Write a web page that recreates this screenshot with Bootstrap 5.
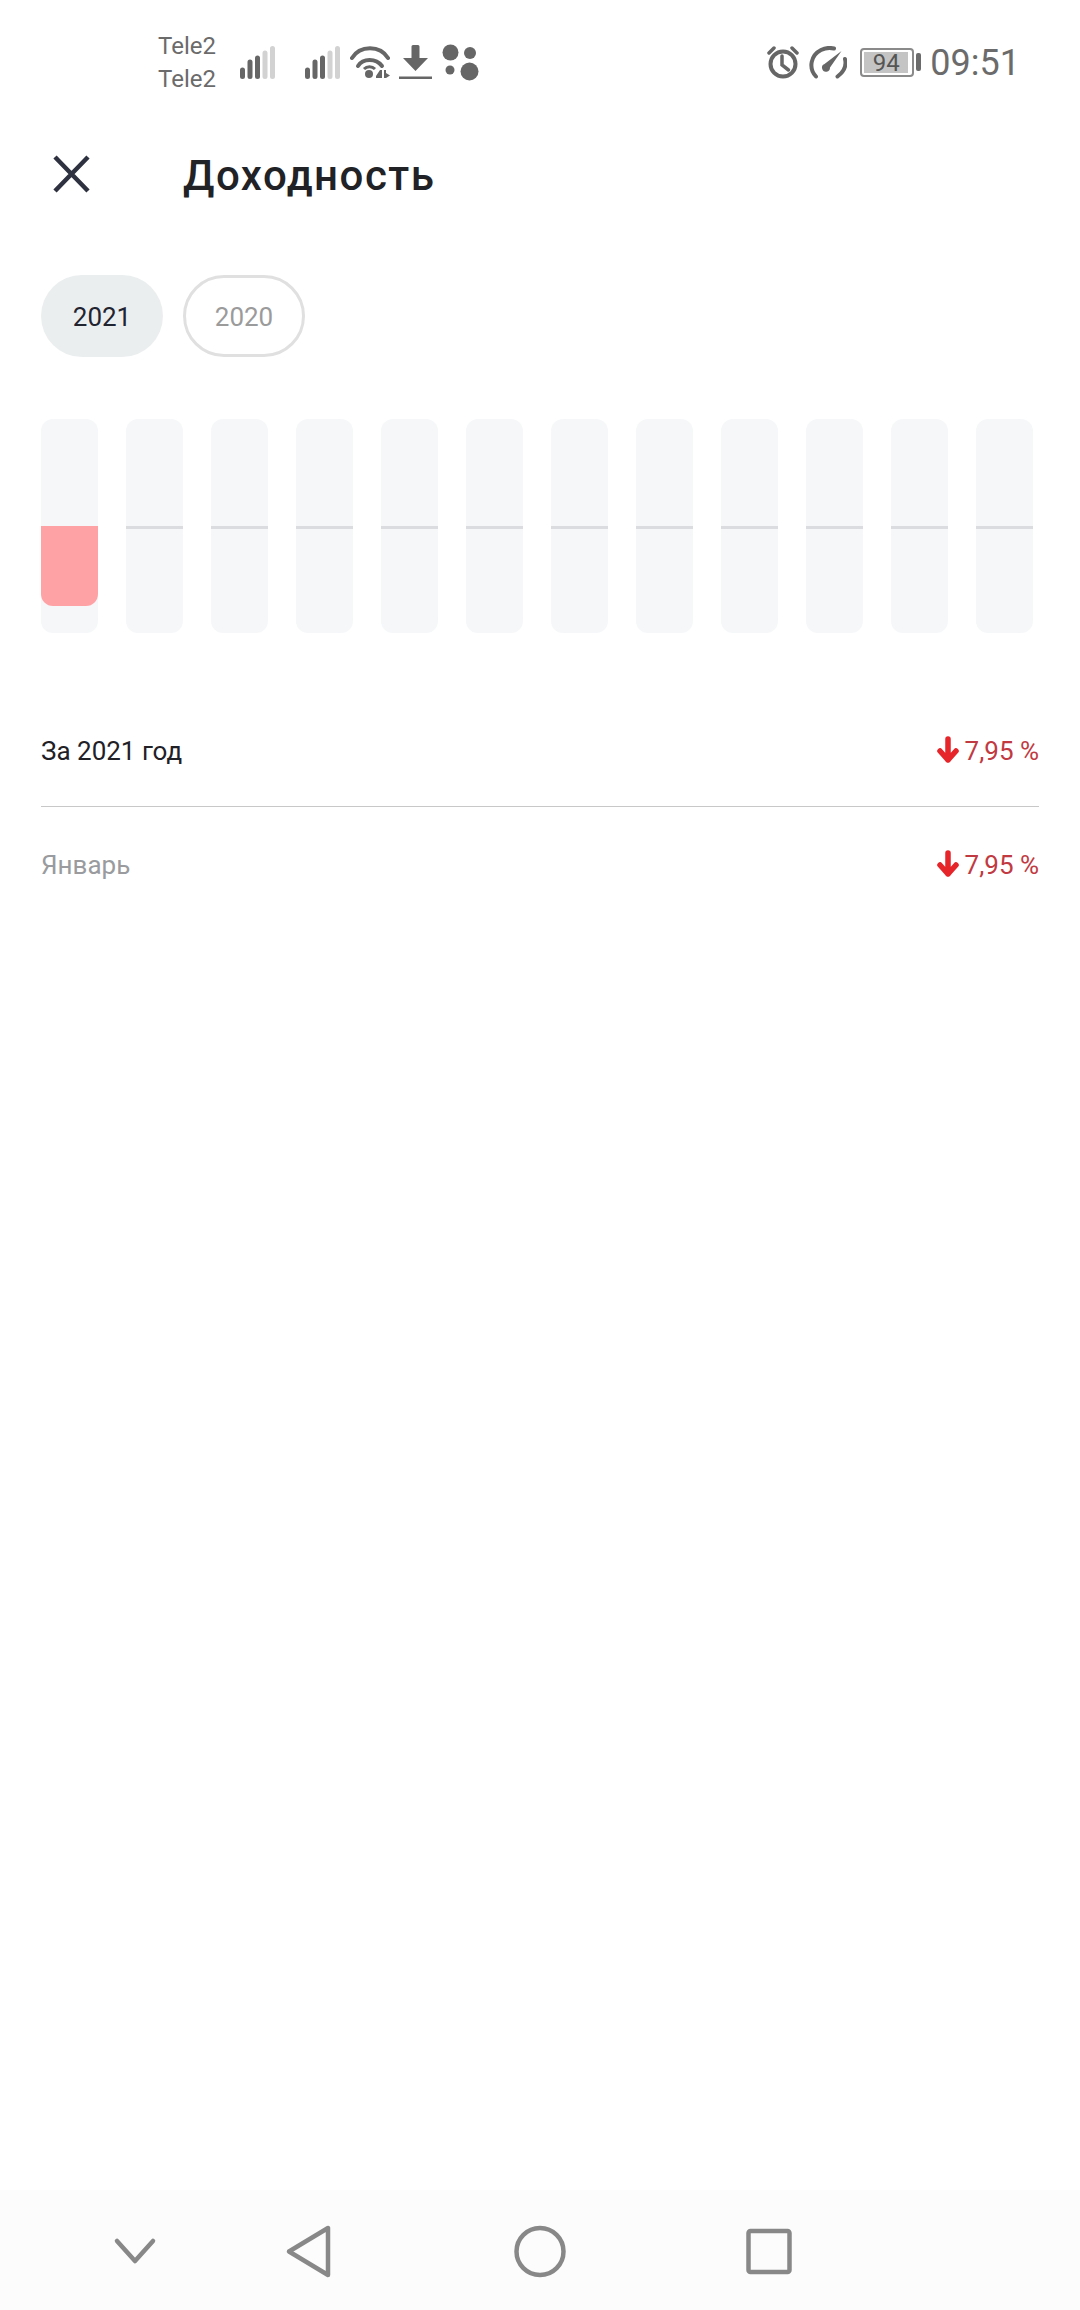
<!DOCTYPE html>
<html lang="ru">
<head>
<meta charset="utf-8">
<title>Доходность</title>
<link href="https://cdn.jsdelivr.net/npm/bootstrap@5.3.0/dist/css/bootstrap.min.css" rel="stylesheet">
<style>
body{font-family:Roboto,"Liberation Sans",sans-serif;background:#fff;color:#1f2127;width:1080px;min-height:2310px}
.app-shell{min-height:2310px}
.status-strip{height:124px;padding-left:158px;padding-right:60px;color:#6b6b6b}
.carriers{font-size:24px;line-height:33px;width:82px;padding-top:1px}
.st-ic{display:block;flex:none}
.m-s1{margin-right:30px}.m-s2{margin-right:10px}.m-s3{margin-right:9px}.m-s4{margin-right:10px}
.push-end{margin-right:auto}
.clock-ic{margin-right:10px}.speed-ic{margin-right:13px}
.batt-box{width:54px;height:29px;border:2px solid #8a8a8a;border-radius:4px;padding:2px;margin-right:2px}
.batt-fill{width:44px;height:21px;background:#c4c4c4;font-size:24px;line-height:22px;text-align:center;color:#555}
.batt-nub{width:5px;height:18px;background:#6b6b6b;border-radius:2px;margin-right:9px}
.clock-txt{font-size:36px;line-height:40px;color:#6b6b6b;font-weight:400;padding-top:2px}
.head-bar{height:100px;padding-left:51px}
.close-ic{width:41px;height:41px;margin-right:91px}
.page-title{font-size:42px;font-weight:500;color:#212226;margin:0;line-height:48px;letter-spacing:1.5px;padding-top:4px}
.year-row{margin-top:51px;padding-left:41px;gap:20px}
.year-pill{width:122px;height:82px;border-radius:41px;font-size:26px;line-height:1;padding-top:2px}
.year-on{background:#ebeeef;color:#1f2430}
.year-off{border:3px solid #e0e0e0;color:#9b9b9b}
.bars-row{margin-top:62px;padding-left:41px;gap:28px}
.bar-track{width:57px;height:214px;background:#f5f7f8;border-radius:12px;padding-top:107px;overflow:hidden}
.bar-mid{height:3px;background:#dadcdf}
.bar-neg{height:80px;background:#ffa2a6;border-radius:0 0 12px 12px}
.stat-list{margin:60px 41px 0 41px}
.stat-line{height:113px;font-size:26px;padding-top:4px}
.stat-first{border-bottom:1px solid #c8c8c8;height:114px}
.stat-name{color:#1f2127}
.stat-muted{color:#999b9e}
.stat-val{color:#c13a42;font-size:26px;gap:6px}
.arrow-ic{width:22px;height:27px;display:block;margin-top:-4px}
.nav-strip{height:120px;background:#fcfcfc;margin-top:auto}
.nav-svg{display:block;width:1080px;height:120px}
</style>
</head>
<body class="m-0">
<div class="app-shell d-flex flex-column">
  <div class="status-strip d-flex align-items-center">
    <div class="carriers"><div>Tele2</div><div>Tele2</div></div>
    <svg class="st-ic m-s1" width="35" height="33" viewBox="0 0 35 33"><g stroke-linecap="round" stroke-width="5"><path d="M2.500 24v6.500M10 16v14.500" stroke="#666"/><path d="M17.500 12v18.500" stroke="#666"/><path d="M25 7v23.500M32.500 2.500v28" stroke="#d2d2d2"/></g></svg>
    <svg class="st-ic m-s2" width="35" height="33" viewBox="0 0 35 33"><g stroke-linecap="round" stroke-width="5"><path d="M2.500 24v6.500M10 16v14.500" stroke="#666"/><path d="M17.500 12v18.500" stroke="#666"/><path d="M25 7v23.500M32.500 2.500v28" stroke="#d2d2d2"/></g></svg>
    <svg class="st-ic m-s3" width="40" height="34" viewBox="0 0 40 34"><g fill="none" stroke="#666" stroke-width="4" stroke-linecap="round"><path d="M2 13C10 0 30 0 38 13"/><path d="M8 21c5-8 18-8 24 0"/></g><circle cx="19" cy="29" r="4" fill="#666"/><path d="M14 24c3-3 8-3 11 0" fill="none" stroke="#666" stroke-width="3"/><path d="M26 33v-2l4-6h2v8zM34 25h2v3l4 2.500-4 2.500h-2z" fill="#666"/></svg>
    <svg class="st-ic m-s4" width="33" height="35" viewBox="0 0 33 35"><path d="M12.500 1.500a1.500 1.500 0 0 1 1.500-1.500h5a1.500 1.500 0 0 1 1.500 1.500V13H29L16.500 26 4 13h8.500z" fill="#666"/><rect y="31.500" width="33" height="2.500" fill="#666"/></svg>
    <svg class="st-ic push-end" width="37" height="37" viewBox="0 0 37 37"><circle cx="8.500" cy="8.500" r="8" fill="#666"/><circle cx="28" cy="9" r="6" fill="#666"/><circle cx="8" cy="26" r="4.500" fill="#666"/><circle cx="27.500" cy="27.500" r="9" fill="#666"/></svg>
    <svg class="st-ic clock-ic" width="32" height="33" viewBox="0 0 32 33"><g fill="none" stroke="#666" stroke-linecap="round"><circle cx="16" cy="18" r="12.500" stroke-width="4"/><path d="M15 10v9l6.500 5" stroke-width="3.500"/><path d="M2 7l5-5M30 7l-5-5" stroke-width="3.500"/></g></svg>
    <svg class="st-ic speed-ic" width="38" height="33" viewBox="0 0 38 33"><g fill="none" stroke="#666" stroke-linecap="round" stroke-width="4"><path d="M7 30.500C-1 22 2 9 12 4c4-2 9-2.500 13-1.500"/><path d="M36 13c1.500 6 0 12-7.500 17.500"/></g><path d="M32.500 5L21 21.500a4 4 0 1 1-5.500-3.500z" fill="#666"/></svg>
    <div class="batt-box"><div class="batt-fill">94</div></div>
    <div class="batt-nub"></div>
    <div class="clock-txt">09:51</div>
  </div>

  <div class="head-bar d-flex align-items-center">
    <svg class="close-ic" viewBox="0 0 41 41"><path d="M4 3l33 34M37 3L4 37" stroke="#2e3140" stroke-width="4.500" fill="none"/></svg>
    <h1 class="page-title">Доходность</h1>
  </div>

  <div class="year-row d-flex">
    <div class="year-pill year-on d-flex align-items-center justify-content-center">2021</div>
    <div class="year-pill year-off d-flex align-items-center justify-content-center">2020</div>
  </div>

  <div class="bars-row d-flex">
    <div class="bar-track"><div class="bar-neg"></div></div>
    <div class="bar-track"><div class="bar-mid"></div></div>
    <div class="bar-track"><div class="bar-mid"></div></div>
    <div class="bar-track"><div class="bar-mid"></div></div>
    <div class="bar-track"><div class="bar-mid"></div></div>
    <div class="bar-track"><div class="bar-mid"></div></div>
    <div class="bar-track"><div class="bar-mid"></div></div>
    <div class="bar-track"><div class="bar-mid"></div></div>
    <div class="bar-track"><div class="bar-mid"></div></div>
    <div class="bar-track"><div class="bar-mid"></div></div>
    <div class="bar-track"><div class="bar-mid"></div></div>
    <div class="bar-track"><div class="bar-mid"></div></div>
  </div>

  <div class="stat-list">
    <div class="stat-line stat-first d-flex align-items-center justify-content-between">
      <span class="stat-name">За 2021 год</span>
      <span class="stat-val d-flex align-items-center"><svg class="arrow-ic" viewBox="0 0 22 27"><path d="M11 3v21M3 15l8 9 8-9" fill="none" stroke="#e5252a" stroke-width="5.500" stroke-linecap="round" stroke-linejoin="round"/></svg>7,95 %</span>
    </div>
    <div class="stat-line d-flex align-items-center justify-content-between">
      <span class="stat-muted">Январь</span>
      <span class="stat-val d-flex align-items-center"><svg class="arrow-ic" viewBox="0 0 22 27"><path d="M11 3v21M3 15l8 9 8-9" fill="none" stroke="#e5252a" stroke-width="5.500" stroke-linecap="round" stroke-linejoin="round"/></svg>7,95 %</span>
    </div>
  </div>

  <div class="nav-strip">
    <svg class="nav-svg" viewBox="0 2190 1080 120"><g fill="none" stroke="#888" stroke-linecap="round" stroke-linejoin="round"><path d="M117 2241l18 20 18-20" stroke-width="4.500"/><path d="M328 2228v47l-39-23.500z" stroke-width="4.500"/><circle cx="540" cy="2251.500" r="23.500" stroke-width="4.500"/><rect x="748.500" y="2231" width="41" height="41" rx="2" stroke-width="4.500"/></g></svg>
  </div>
</div>
<script src="https://cdn.jsdelivr.net/npm/bootstrap@5.3.0/dist/js/bootstrap.bundle.min.js"></script>
</body>
</html>
